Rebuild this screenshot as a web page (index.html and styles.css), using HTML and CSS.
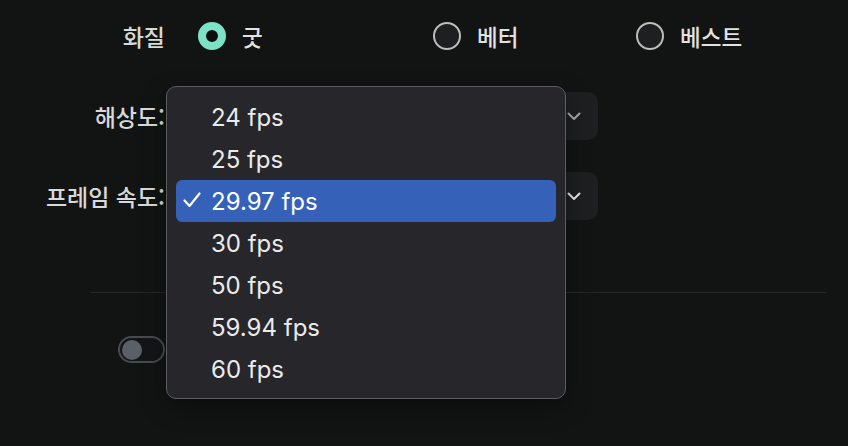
FILE: index.html
```html
<!DOCTYPE html>
<html lang="ko">
<head>
<meta charset="utf-8">
<link rel="stylesheet" href="styles.css">
</head>
<body>
<div class="page">
  <div class="row row-quality">
    <div class="label">화질</div>
    <div class="radios">
      <div class="option opt-1"><span class="radio checked"></span><span class="opt-text">굿</span></div>
      <div class="option opt-2"><span class="radio"></span><span class="opt-text">베터</span></div>
      <div class="option opt-3"><span class="radio"></span><span class="opt-text">베스트</span></div>
    </div>
  </div>
  <div class="row row-select">
    <div class="label">해상도:</div>
    <div class="select">
      <svg class="chev dim" width="14" height="9" viewBox="0 0 14 9"><polyline points="1.5,1.5 7,7 12.5,1.5" fill="none" stroke="currentColor" stroke-width="2" stroke-linecap="round" stroke-linejoin="round"/></svg>
    </div>
  </div>
  <div class="row row-select row-fps">
    <div class="label">프레임 속도:</div>
    <div class="select">
      <svg class="chev" width="14" height="9" viewBox="0 0 14 9"><polyline points="1.5,1.5 7,7 12.5,1.5" fill="none" stroke="currentColor" stroke-width="2" stroke-linecap="round" stroke-linejoin="round"/></svg>
    </div>
  </div>
  <div class="divider"></div>
  <div class="row row-toggle">
    <div class="toggle"><span class="knob"></span></div>
  </div>

  <div class="menu">
    <div class="item">24 fps</div>
    <div class="item">25 fps</div>
    <div class="item selected"><svg class="check" width="18" height="16" viewBox="0 0 18 16"><polyline points="1.5,8.5 6.5,14 16.5,1.5" fill="none" stroke="#ffffff" stroke-width="2.2" stroke-linecap="round" stroke-linejoin="round"/></svg>29.97 fps</div>
    <div class="item">30 fps</div>
    <div class="item">50 fps</div>
    <div class="item">59.94 fps</div>
    <div class="item">60 fps</div>
  </div>
</div>
</body>
</html>
```

FILE: styles.css
```css
html, body {
  margin: 0;
  padding: 0;
  background: #121313;
  width: 848px;
  height: 446px;
  overflow: hidden;
}
body {
  font-family: "Noto Sans CJK KR", "Noto Sans", sans-serif;
  color: #dcdcdc;
}
.page {
  position: relative;
  padding-top: 22px;
  height: 424px;
}
.row {
  display: flex;
  align-items: center;
}
.label {
  width: 165px;
  flex: none;
  text-align: right;
  font-size: 23px;
  font-weight: 500;
  line-height: 28px;
  color: #d9d9d9;
}
.row-quality {
  height: 28px;
}
.radios {
  display: flex;
  align-items: center;
  margin-left: 33px;
}
.option {
  display: flex;
  align-items: center;
  gap: 16px;
}
.opt-1 { width: 235px; }
.opt-2 { width: 203px; }
.opt-text {
  font-size: 22.5px;
  font-weight: 500;
  line-height: 28px;
  color: #e2e2e2;
}
.radio {
  width: 28px;
  height: 28px;
  box-sizing: border-box;
  border-radius: 50%;
  border: 2px solid #bdbdbd;
  background: #1e1f20;
  flex: none;
}
.radio.checked {
  border: 8px solid #7ee2c6;
  background: #0c0d0d;
}
.row-select {
  height: 48px;
  margin-top: 42px;
}
.row-fps {
  margin-top: 32px;
}
.select {
  margin-left: 13px;
  width: 420px;
  height: 48px;
  border-radius: 10px;
  background: #1e1f21;
  display: flex;
  align-items: center;
  justify-content: flex-end;
  padding-right: 17px;
  box-sizing: border-box;
}
.chev {
  color: #e6e6e6;
}
.chev.dim {
  color: #a9a9ab;
}
.divider {
  margin: 72px 0 0 90px;
  width: 736px;
  height: 1px;
  background: #262727;
}
.row-toggle {
  margin-top: 43px;
  padding-left: 118px;
}
.toggle {
  width: 47px;
  height: 27px;
  box-sizing: border-box;
  border: 2px solid #474a4f;
  border-radius: 14px;
  background: #141516;
  display: flex;
  align-items: center;
  padding-left: 2px;
}
.knob {
  width: 20px;
  height: 20px;
  border-radius: 50%;
  background: #5b6068;
}
.menu {
  position: absolute;
  left: 166px;
  top: 86px;
  width: 400px;
  height: 313px;
  box-sizing: border-box;
  border: 1px solid #5b5b60;
  border-radius: 10px;
  background: #27262b;
  padding: 9px 9px 8px;
  box-shadow: 0 8px 24px rgba(0,0,0,0.35);
}
.item {
  position: relative;
  height: 42px;
  display: flex;
  align-items: center;
  padding-left: 35px;
  font-family: "Inter", "Liberation Sans", sans-serif;
  font-size: 24px;
  color: #ebebec;
  border-radius: 6px;
}
.item.selected {
  background: #3561b8;
  color: #ffffff;
}
.check {
  position: absolute;
  left: 7px;
  top: 12px;
}
```
